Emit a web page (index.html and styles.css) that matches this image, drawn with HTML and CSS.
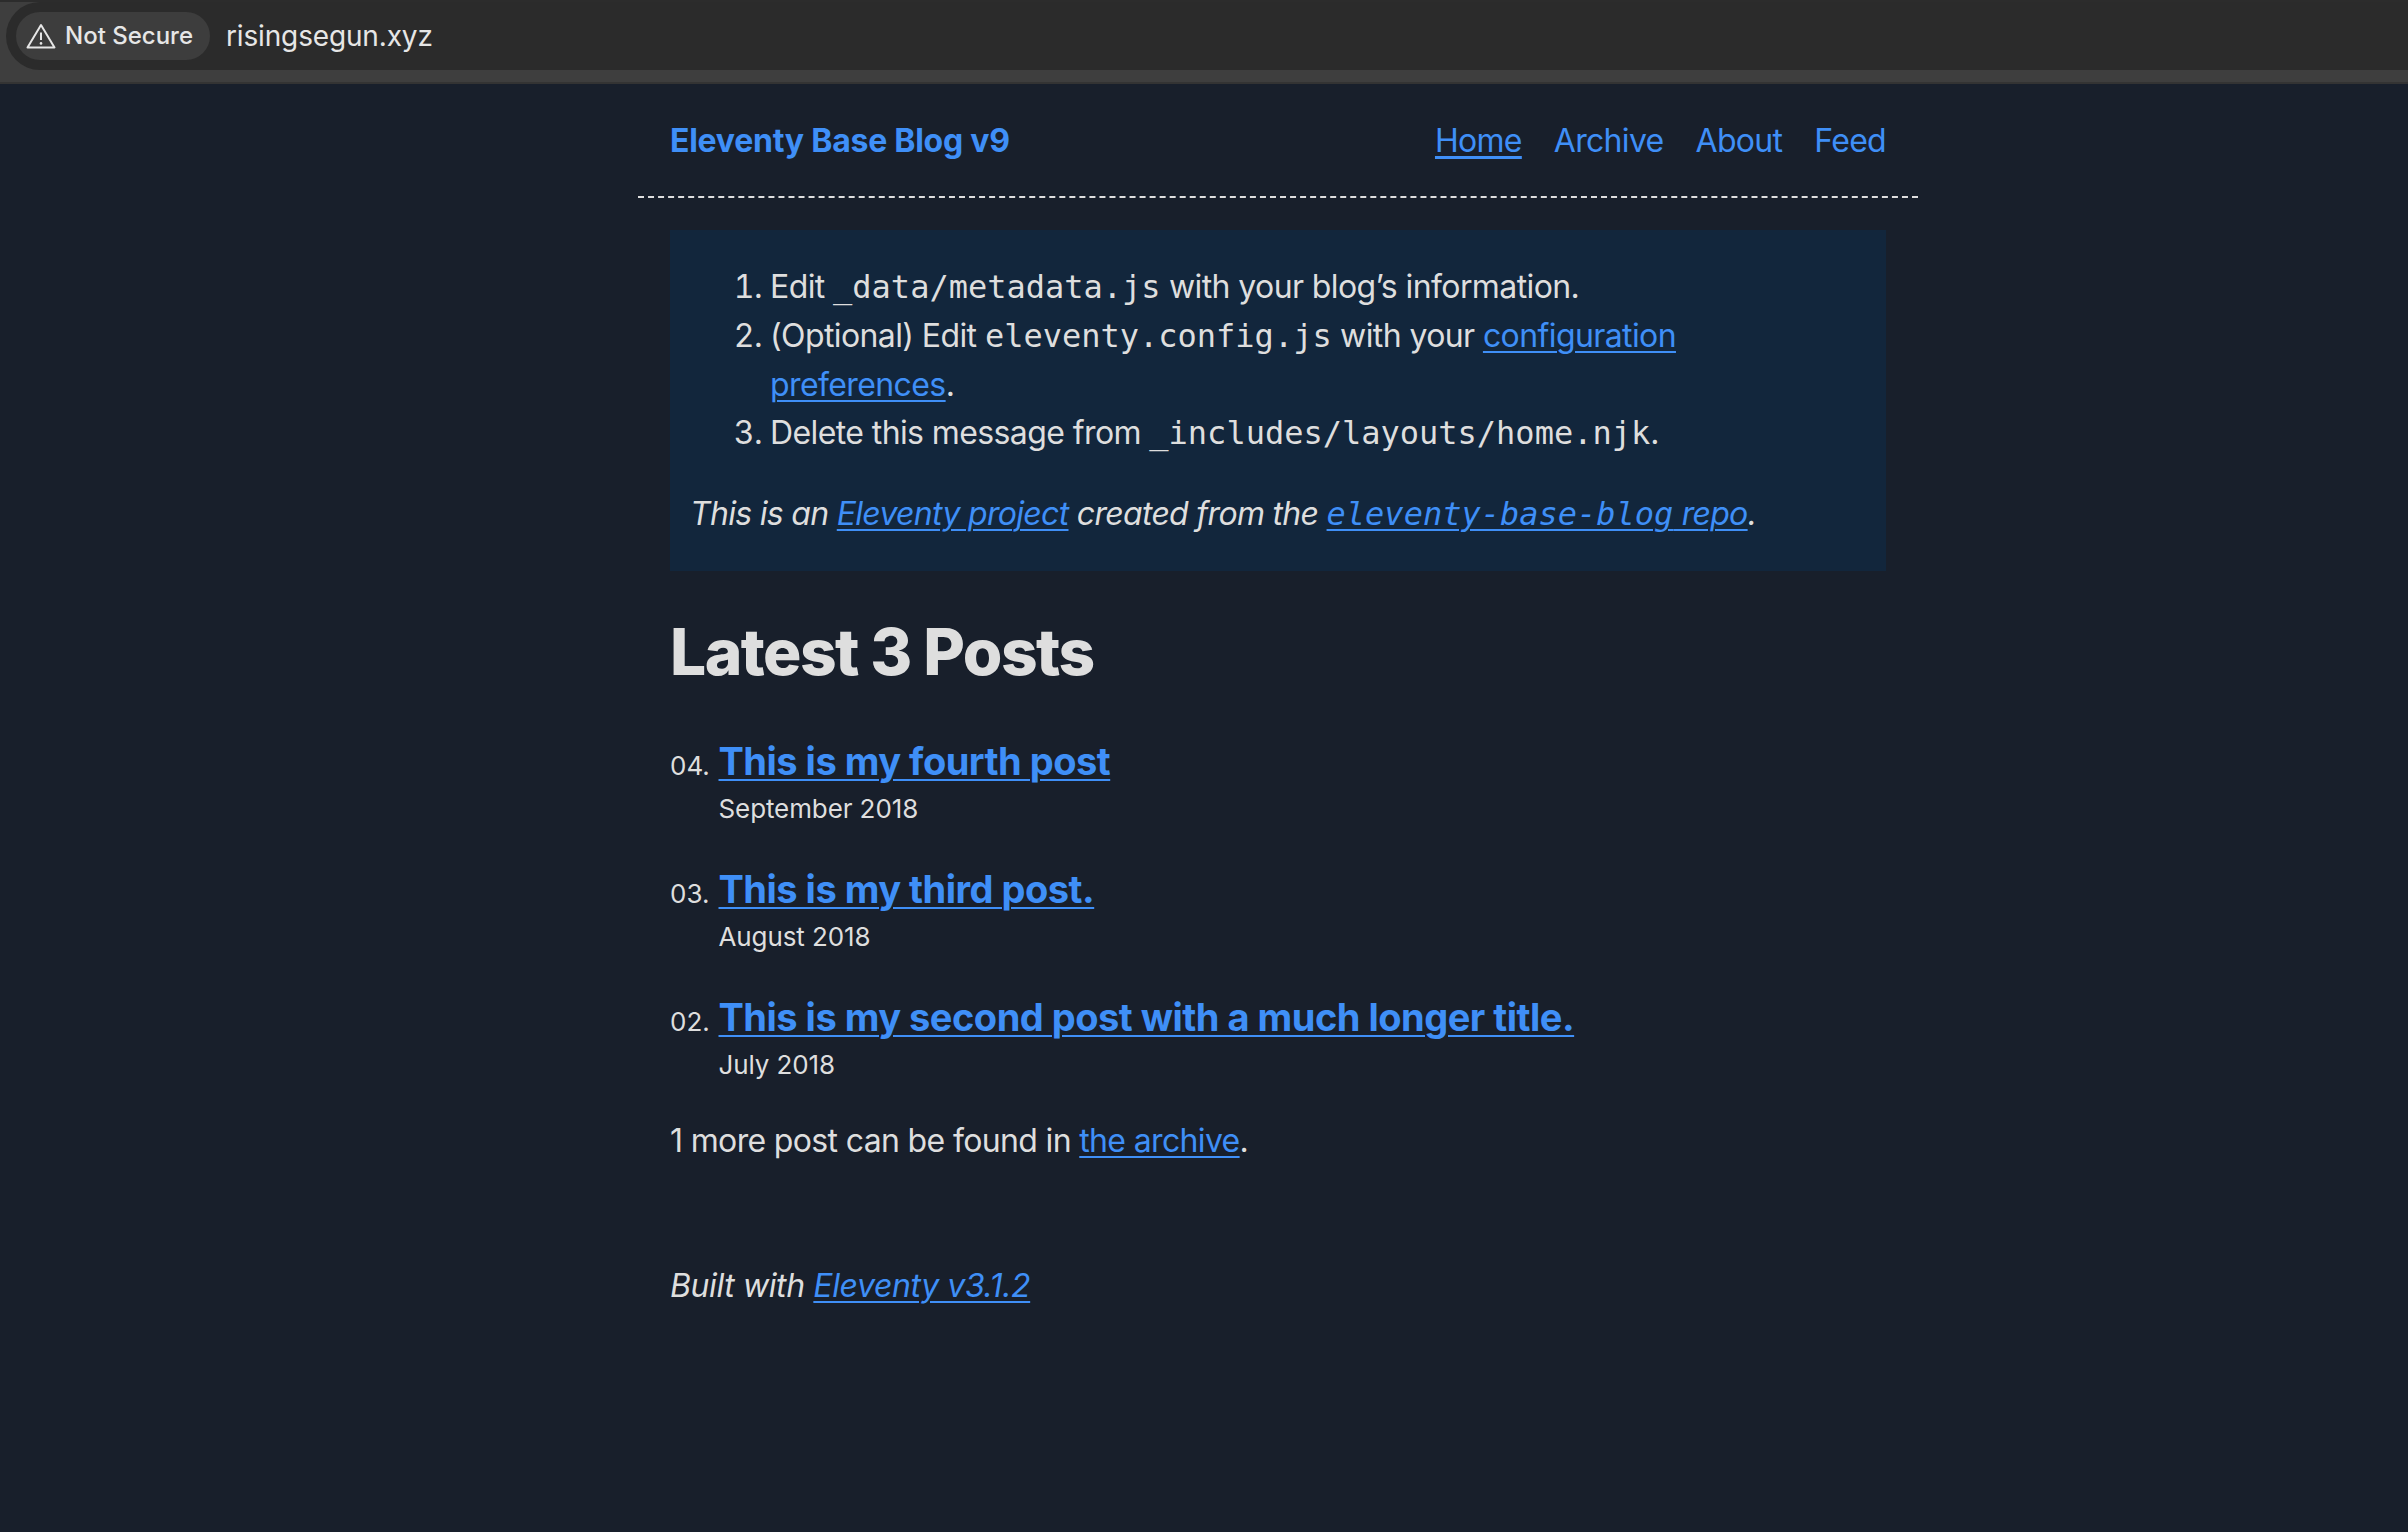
FILE: index.html
```html
<!DOCTYPE html>
<html lang="en">
<head>
<meta charset="utf-8">
<title>Eleventy Base Blog v9</title>
<link rel="stylesheet" href="styles.css">
</head>
<body>
<div class="browser">
  <div class="omnibox">
    <div class="chip">
      <svg class="warn" viewBox="0 0 30 26" width="30" height="26" aria-hidden="true">
        <path d="M15 2 L28.5 24.5 H1.5 Z" fill="none" stroke="#e6e6e6" stroke-width="2" stroke-linejoin="round"/>
        <path d="M15 9.5 V17" stroke="#e6e6e6" stroke-width="2"/>
        <circle cx="15" cy="20.4" r="1.3" fill="#e6e6e6"/>
      </svg>
      <span>Not Secure</span>
    </div>
    <span class="url">risingsegun.xyz</span>
  </div>
</div>
<div class="page">
  <header class="site-header">
    <a class="home-link" href="#">Eleventy Base Blog v9</a>
    <nav class="nav">
      <a class="current" href="#">Home</a>
      <a href="#">Archive</a>
      <a href="#">About</a>
      <a href="#">Feed</a>
    </nav>
  </header>
  <main class="main">
    <section class="message">
      <ol class="steps">
        <li>Edit <code>_data/metadata.js</code> with your blog’s information.</li>
        <li>(Optional) Edit <code>eleventy.config.js</code> with your <a href="#">configuration preferences</a>.</li>
        <li>Delete this message from <code>_includes/layouts/home.njk</code>.</li>
      </ol>
      <p class="note"><em>This is an <a href="#">Eleventy project</a> created from the <a href="#"><code>eleventy-base-blog</code> repo</a>.</em></p>
    </section>
    <h1 class="title">Latest 3 Posts</h1>
    <ol class="posts">
      <li class="post">
        <span class="num">04.</span>
        <div class="post-body">
          <a class="post-link" href="#">This is my fourth post</a>
          <time class="date">September 2018</time>
        </div>
      </li>
      <li class="post">
        <span class="num">03.</span>
        <div class="post-body">
          <a class="post-link" href="#">This is my third post.</a>
          <time class="date">August 2018</time>
        </div>
      </li>
      <li class="post">
        <span class="num">02.</span>
        <div class="post-body">
          <a class="post-link" href="#">This is my second post with a much longer title.</a>
          <time class="date">July 2018</time>
        </div>
      </li>
    </ol>
    <p class="more">1 more post can be found in <a href="#">the archive</a>.</p>
  </main>
  <footer class="footer"><em>Built with <a href="#">Eleventy v3.1.2</a></em></footer>
</div>
</body>
</html>
```
FILE: styles.css
```css
* { box-sizing: border-box; }
html, body { margin: 0; height: 100%; }
body {
  background: #181f2b;
  color: #dedede;
  font-family: Inter, "Liberation Sans", sans-serif;
  font-size: 32px;
  line-height: 48.8px;
  letter-spacing: -0.65px;
  overflow: hidden;
}
a { color: #3f8ff7; text-decoration: underline; text-decoration-thickness: 2px; text-underline-offset: 4px; }
code { font-family: "DejaVu Sans Mono", monospace; font-size: 32px; line-height: 1; letter-spacing: 0; }

.browser {
  height: 84px;
  background: #3e3e3e;
  border-top: 2px solid #2c2c2c;
  border-bottom: 2px solid #333;
  letter-spacing: 0;
}
.omnibox {
  height: 68px;
  margin-left: 6px;
  padding-left: 10px;
  background: #2b2b2b;
  border-radius: 34px 0 0 34px;
  display: flex;
  align-items: center;
  gap: 16px;
  color: #e6e6e6;
}
.chip {
  height: 48px;
  width: 194px;
  padding-left: 10px;
  background: #3d3d3d;
  border-radius: 24px;
  display: flex;
  align-items: center;
  gap: 9px;
  font-size: 24px;
  font-weight: 500;
  line-height: 1;
}
.warn { flex: none; }
.url { font-size: 28px; line-height: 1; letter-spacing: -0.15px; }

.page { width: 1280px; margin-left: 638px; }
.site-header {
  height: 114px;
  padding: 2px 32px 0;
  display: flex;
  justify-content: space-between;
  align-items: center;
  border-bottom: 2px dashed #dedede;
}
.home-link { font-size: 32px; font-weight: 700; text-decoration: none; letter-spacing: -0.25px; }
.nav { display: flex; gap: 32px; letter-spacing: -0.7px; }
.nav a { text-decoration: none; }
.nav .current { text-decoration: underline; text-decoration-thickness: 3px; }

.main { padding: 32px 32px 0; }
.message { background: #12263c; padding: 33px 20px 16px; }
.steps { margin: 0; padding: 0 60px 0 80px; letter-spacing: -0.6px; }
.note { margin: 32px 0 16px; letter-spacing: -0.7px; }
.title { margin: 42px 0 46px; font-size: 64px; line-height: 78px; font-weight: 800; letter-spacing: -1.55px; }
.posts { list-style: none; margin: 0; padding: 0; }
.post { display: flex; gap: 9.5px; margin-bottom: 34px; align-items: baseline; }
.post:last-child { margin-bottom: 30px; }
.num { font-size: 26px; width: 39px; letter-spacing: 0; }
.post-body { display: flex; flex-direction: column; align-items: flex-start; }
.post-link { font-size: 38px; font-weight: 700; letter-spacing: -0.5px; line-height: 49px; }
.date { font-size: 26px; line-height: 45px; letter-spacing: -0.1px; }
.more { margin: 0; }
.footer { padding: 96px 32px 0; letter-spacing: -0.4px; }
```
